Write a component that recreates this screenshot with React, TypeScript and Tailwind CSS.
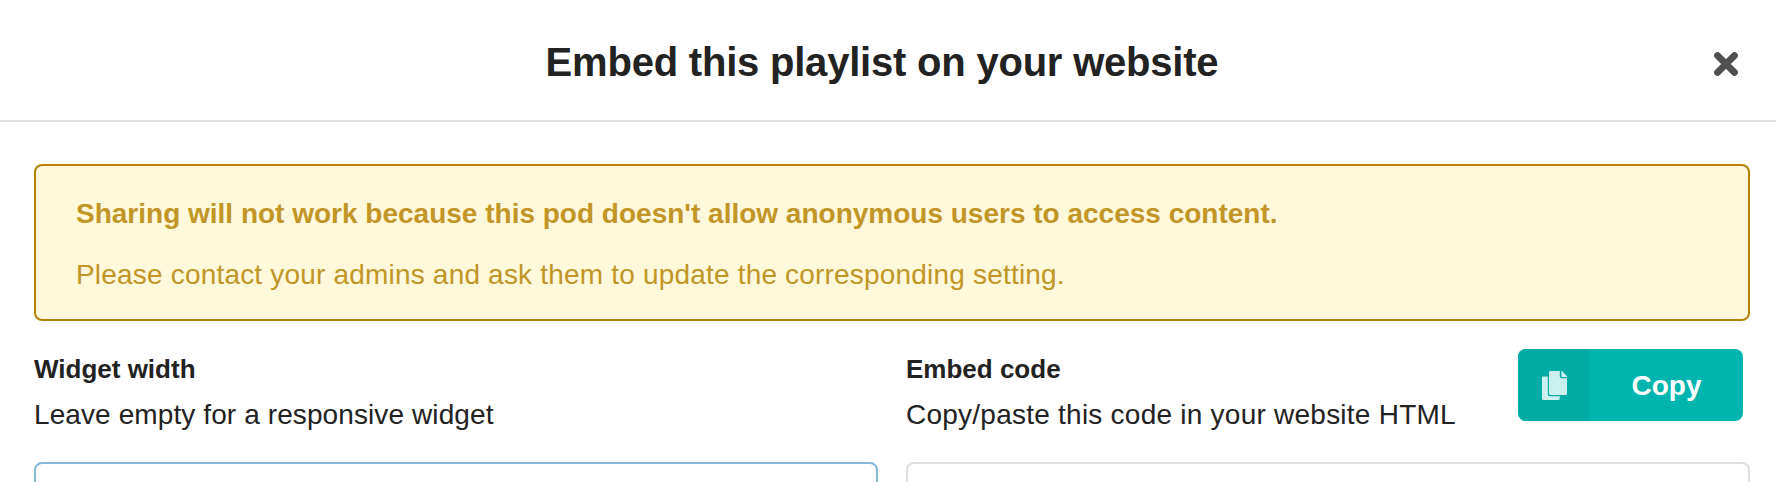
import type { ReactNode } from "react";

interface FieldLabelProps {
  title: ReactNode;
  hint: ReactNode;
}

function CloseIcon() {
  return (
    <svg className="h-6 w-6" viewBox="0 0 24 24" fill="none" stroke="currentColor" strokeWidth="7" strokeLinecap="round">
      <path d="M3.6 3.6 20.4 20.4M20.4 3.6 3.6 20.4" />
    </svg>
  );
}

function CopyIcon() {
  return (
    <svg className="h-[29px] w-[25px]" viewBox="0 0 25 29" fill="currentColor">
      <path d="M1.4 5.6H5.8V23.2A2 2 0 0 0 7.8 25.2H17.8V27.6A1.4 1.4 0 0 1 16.4 29H1.4A1.4 1.4 0 0 1 0 27.6V7A1.4 1.4 0 0 1 1.4 5.6Z" />
      <path d="M8.4 0H17.8V5.8A1.4 1.4 0 0 0 19.2 7.2H25V22.6A1.4 1.4 0 0 1 23.6 24H8.4A1.4 1.4 0 0 1 7 22.6V1.4A1.4 1.4 0 0 1 8.4 0Z" />
      <path d="M19.4 0Q20 0 20.5 .5L24.5 4.8Q25 5.4 25 6H19.4Z" />
    </svg>
  );
}

function FieldLabel({ title, hint }: FieldLabelProps) {
  return (
    <div className="whitespace-nowrap">
      <div className="h-[46px] text-[26px] leading-[46px] font-bold">{title}</div>
      <div className="h-[46px] text-[28px] leading-[45px]">{hint}</div>
    </div>
  );
}

export default function App() {
  return (
    <div className="h-[482px] w-[1776px] overflow-hidden bg-white font-['Liberation_Sans',Arial,sans-serif] text-[#222222]">
      <header className="grid h-[122px] grid-cols-[100px_1fr_100px] items-center border-b-2 border-[#dededf]">
        <h1 className="col-start-2 mt-1 -ml-3 text-center text-[40px] leading-[50px] font-bold tracking-[-0.21px] whitespace-nowrap">
          Embed this playlist on your website
        </h1>
        <button className="mt-2 ml-[38px] w-6 text-[#505050]" aria-label="Close">
          <CloseIcon />
        </button>
      </header>

      <main className="pt-[42px] pr-[26px] pl-[34px]">
        <div className="h-[157px] rounded-lg border-2 border-[#b58105] bg-[#fff8db] pt-[17px] pl-10 text-[28px] whitespace-nowrap text-[#c19527]">
          <p className="h-[61px] leading-[61px] font-bold">
            Sharing will not work because this pod doesn't allow anonymous users to access content.
          </p>
          <p className="h-[61px] leading-[61px] tracking-[0.19px]">
            Please contact your admins and ask them to update the corresponding setting.
          </p>
        </div>

        <div className="mt-[25px] grid grid-cols-2 gap-x-7">
          <section>
            <div className="h-[116px]">
              <FieldLabel
                title="Widget width"
                hint={<span className="tracking-[0.1px]">Leave empty for a responsive widget</span>}
              />
            </div>
            <input className="block h-[76px] w-full rounded-lg border-2 border-[#85b7d9] outline-none" />
          </section>

          <section>
            <div className="flex h-[116px] items-start justify-between pr-[7px]">
              <FieldLabel
                title="Embed code"
                hint={<span className="tracking-[0.24px]">Copy/paste this code in your website HTML</span>}
              />
              <button className="mt-[3px] flex h-[72px] w-[225px] overflow-hidden rounded-lg bg-[#00b5ad] text-white">
                <span className="flex h-full w-[72px] items-center justify-center bg-[#00aca4] text-[#ccf0ee]">
                  <CopyIcon />
                </span>
                <span className="flex-1 text-center text-[28px] leading-[74px] font-bold">Copy</span>
              </button>
            </div>
            <textarea className="block h-[76px] w-full resize-none rounded-lg border-2 border-[#dededf] outline-none" />
          </section>
        </div>
      </main>
    </div>
  );
}
